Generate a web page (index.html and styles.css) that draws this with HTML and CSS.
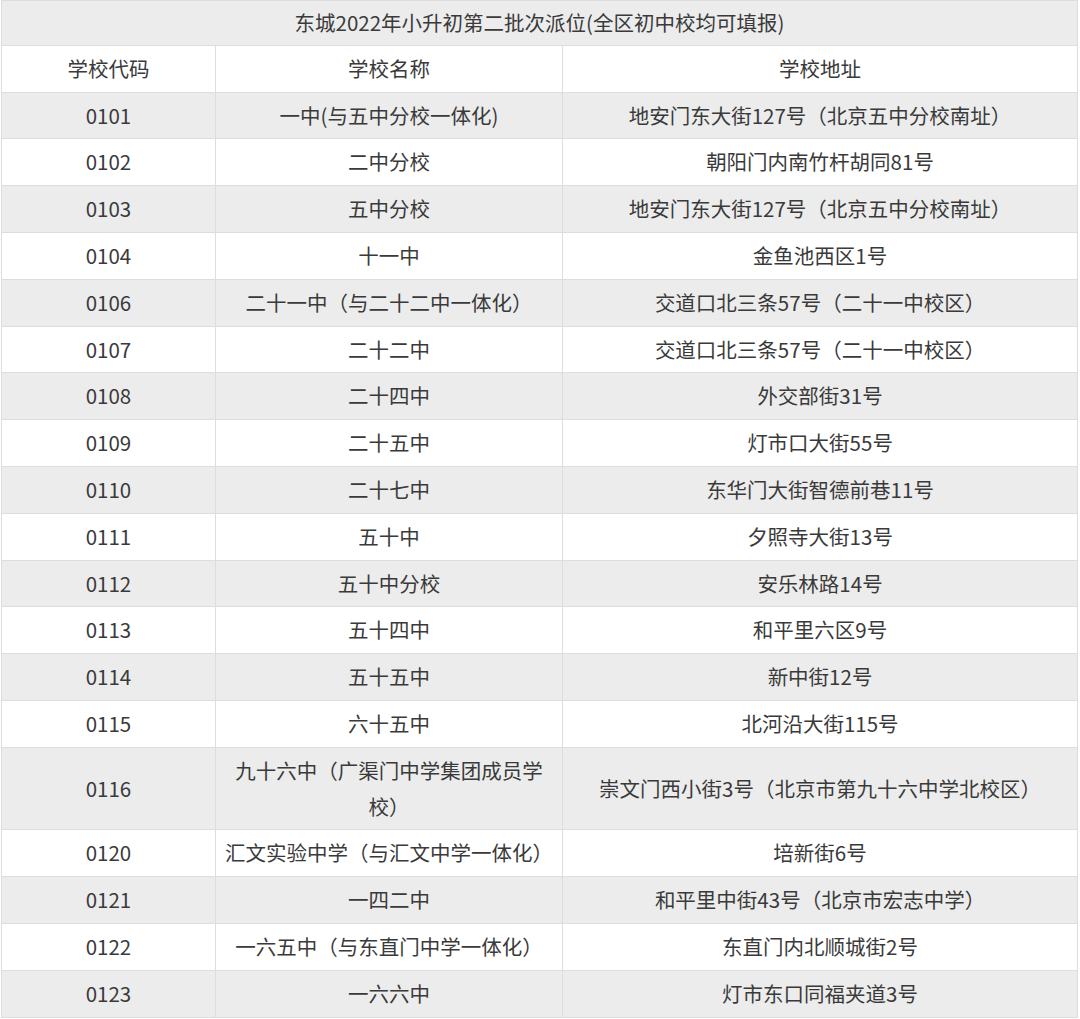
FILE: index.html
```html
<!DOCTYPE html>
<html lang="zh-CN">
<head>
<meta charset="utf-8">
<title>东城2022年小升初第二批次派位</title>
<link rel="stylesheet" href="styles.css">
</head>
<body>
<table class="schools">
  <colgroup>
    <col class="c-code">
    <col class="c-name">
    <col class="c-addr">
  </colgroup>
  <tr class="title"><td colspan="3">东城2022年小升初第二批次派位(全区初中校均可填报)</td></tr>
  <tr class="head"><td>学校代码</td><td>学校名称</td><td>学校地址</td></tr>
  <tr class="odd"><td>0101</td><td>一中(与五中分校一体化)</td><td>地安门东大街127号（北京五中分校南址）</td></tr>
  <tr class="even"><td>0102</td><td>二中分校</td><td>朝阳门内南竹杆胡同81号</td></tr>
  <tr class="odd"><td>0103</td><td>五中分校</td><td>地安门东大街127号（北京五中分校南址）</td></tr>
  <tr class="even"><td>0104</td><td>十一中</td><td>金鱼池西区1号</td></tr>
  <tr class="odd"><td>0106</td><td>二十一中（与二十二中一体化）</td><td>交道口北三条57号（二十一中校区）</td></tr>
  <tr class="even"><td>0107</td><td>二十二中</td><td>交道口北三条57号（二十一中校区）</td></tr>
  <tr class="odd"><td>0108</td><td>二十四中</td><td>外交部街31号</td></tr>
  <tr class="even"><td>0109</td><td>二十五中</td><td>灯市口大街55号</td></tr>
  <tr class="odd"><td>0110</td><td>二十七中</td><td>东华门大街智德前巷11号</td></tr>
  <tr class="even"><td>0111</td><td>五十中</td><td>夕照寺大街13号</td></tr>
  <tr class="odd"><td>0112</td><td>五十中分校</td><td>安乐林路14号</td></tr>
  <tr class="even"><td>0113</td><td>五十四中</td><td>和平里六区9号</td></tr>
  <tr class="odd"><td>0114</td><td>五十五中</td><td>新中街12号</td></tr>
  <tr class="even"><td>0115</td><td>六十五中</td><td>北河沿大街115号</td></tr>
  <tr class="odd"><td>0116</td><td>九十六中（广渠门中学集团成员学校）</td><td>崇文门西小街3号（北京市第九十六中学北校区）</td></tr>
  <tr class="even"><td>0120</td><td>汇文实验中学（与汇文中学一体化）</td><td>培新街6号</td></tr>
  <tr class="odd"><td>0121</td><td>一四二中</td><td>和平里中街43号（北京市宏志中学）</td></tr>
  <tr class="even"><td>0122</td><td>一六五中（与东直门中学一体化）</td><td>东直门内北顺城街2号</td></tr>
  <tr class="odd"><td>0123</td><td>一六六中</td><td>灯市东口同福夹道3号</td></tr>
</table>
</body>
</html>
```

FILE: styles.css
```css
html, body {
  margin: 0;
  padding: 0;
  background: #ffffff;
}

body {
  font-family: "Noto Sans CJK SC", "Noto Sans", sans-serif;
  color: #3a3a3a;
  font-size: 20.5px;
}

.schools {
  border-collapse: collapse;
  table-layout: fixed;
  width: 1076px;
  margin-left: 1px;
}

.c-code { width: 214px; }
.c-name { width: 347px; }
.c-addr { width: 515px; }

.schools td {
  border: 1px solid #dddddd;
  text-align: center;
  vertical-align: middle;
  line-height: 35.8px;
  padding: 5px 8px;
}

.title td {
  background: #ececec;
  padding-top: 4px;
  padding-bottom: 4px;
}

.head td {
  background: #ffffff;
}

.odd td {
  background: #ececec;
}

.even td {
  background: #ffffff;
}
```
